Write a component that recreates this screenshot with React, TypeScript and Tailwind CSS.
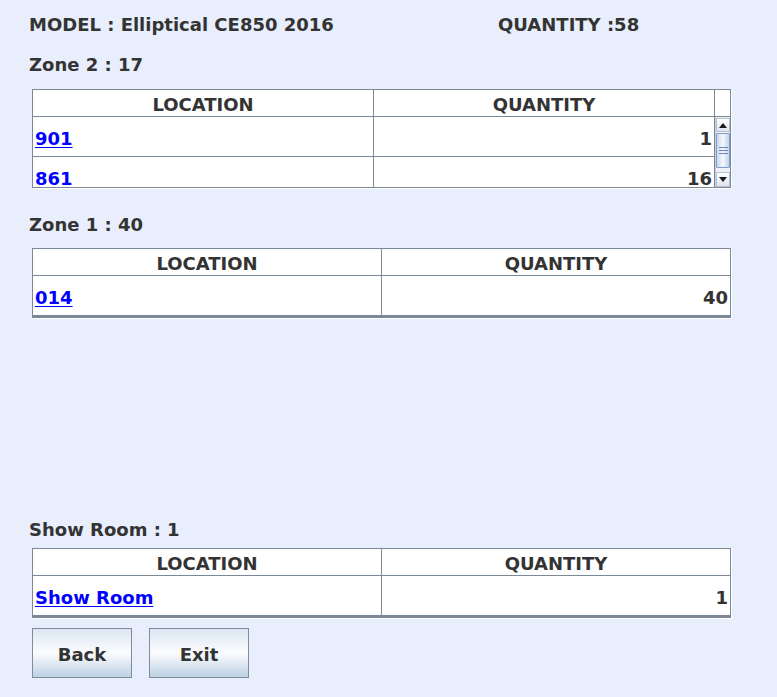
import React from "react";

const font = { fontFamily: '"DejaVu Sans", Verdana, sans-serif' };

interface Row {
  location: string;
  quantity: number;
}

const HeaderCell = ({ label, className }: { label: string; className: string }) => (
  <div className={`flex items-center justify-center pt-[2px] ${className}`}>{label}</div>
);

const BodyRow = ({ row, leftW, rightW }: { row: Row; leftW: string; rightW: string }) => (
  <div className="flex h-[40px] shrink-0 border-b border-[#7b8895]">
    <div className={`flex items-center pl-[2px] pt-[3px] border-r border-[#7b8895] ${leftW}`}>
      <a href="#" className="text-[#0000ff] underline underline-offset-[2px]">
        {row.location}
      </a>
    </div>
    <div className={`flex items-center justify-end pr-[2px] pt-[3px] ${rightW}`}>{row.quantity}</div>
  </div>
);

const ScrollBar = () => (
  <div className="w-[16px] h-full flex flex-col bg-[#eef2f8] border-l border-[#c8d0da]">
    <div className="h-[14px] mt-[1px] flex items-center justify-center bg-gradient-to-b from-[#ffffff] to-[#dde4ee] border border-[#b9c3cf]">
      <svg width="8" height="5" viewBox="0 0 8 5">
        <path d="M0 5 L4 0 L8 5 Z" fill="#1a1a1a" />
      </svg>
    </div>
    <div className="h-[35px] mt-[1px] flex flex-col items-center justify-center gap-[2px] bg-gradient-to-r from-[#c9d8ee] via-[#f4f8fd] to-[#c2d3ec] border border-[#7e9ed2] rounded-[1px]">
      <div className="w-[9px] h-px bg-[#6d88c0]" />
      <div className="w-[9px] h-px bg-[#6d88c0]" />
      <div className="w-[9px] h-px bg-[#6d88c0]" />
    </div>
    <div className="flex-1" />
    <div className="h-[15px] flex items-center justify-center bg-gradient-to-b from-[#ffffff] to-[#dde4ee] border border-[#b9c3cf]">
      <svg width="8" height="5" viewBox="0 0 8 5">
        <path d="M0 0 L4 5 L8 0 Z" fill="#1a1a1a" />
      </svg>
    </div>
  </div>
);

const ScrollTable = ({ rows }: { rows: Row[] }) => (
  <div className="ml-[3px] w-[699px] bg-white border border-[#7b8895] shadow-[1px_1px_0_#ffffff]">
    <div className="flex h-[27px] border-b border-[#7b8895]">
      <HeaderCell label="LOCATION" className="w-[341px] border-r border-[#7b8895]" />
      <HeaderCell label="QUANTITY" className="w-[341px] border-r border-[#7b8895]" />
      <div className="flex-1" />
    </div>
    <div className="flex h-[70px] overflow-hidden">
      <div className="w-[682px] flex flex-col">
        {rows.map((r) => (
          <BodyRow key={r.location} row={r} leftW="w-[341px]" rightW="w-[341px] border-r border-[#7b8895]" />
        ))}
      </div>
      <ScrollBar />
    </div>
  </div>
);

const PlainTable = ({ rows }: { rows: Row[] }) => (
  <div className="ml-[3px] w-[699px] bg-white border border-[#7b8895] border-b-[2px] shadow-[1px_1px_0_#ffffff]">
    <div className="flex h-[27px] border-b border-[#7b8895]">
      <HeaderCell label="LOCATION" className="w-[349px] border-r border-[#7b8895]" />
      <HeaderCell label="QUANTITY" className="flex-1" />
    </div>
    {rows.map((r) => (
      <BodyRow key={r.location} row={r} leftW="w-[349px]" rightW="flex-1" />
    ))}
  </div>
);

const Button = ({ label }: { label: string }) => (
  <button className="w-[100px] h-[50px] border border-[#7f8d9b] bg-gradient-to-b from-[#dce6f2] via-[#fbfcfe] to-[#bed1e3] text-[#333333] font-bold pt-[2px]">
    {label}
  </button>
);

export default function App() {
  return (
    <div
      className="w-[777px] h-[697px] bg-[#e8eefb] text-[#333333] font-bold text-[18px] leading-[21px] pl-[29px] pt-[14px] flex flex-col"
      style={font}
    >
      <div className="flex">
        <div className="w-[469px]">MODEL : Elliptical CE850 2016</div>
        <div>QUANTITY :58</div>
      </div>

      <div className="mt-[19px]">Zone 2 : 17</div>
      <div className="mt-[14px]">
        <ScrollTable
          rows={[
            { location: "901", quantity: 1 },
            { location: "861", quantity: 16 },
          ]}
        />
      </div>

      <div className="mt-[26px]">Zone 1 : 40</div>
      <div className="mt-[13px]">
        <PlainTable rows={[{ location: "014", quantity: 40 }]} />
      </div>

      <div className="mt-[201px]">Show Room : 1</div>
      <div className="mt-[8px]">
        <PlainTable rows={[{ location: "Show Room", quantity: 1 }]} />
      </div>

      <div className="mt-[10px] ml-[3px] flex gap-[17px]">
        <Button label="Back" />
        <Button label="Exit" />
      </div>
    </div>
  );
}
